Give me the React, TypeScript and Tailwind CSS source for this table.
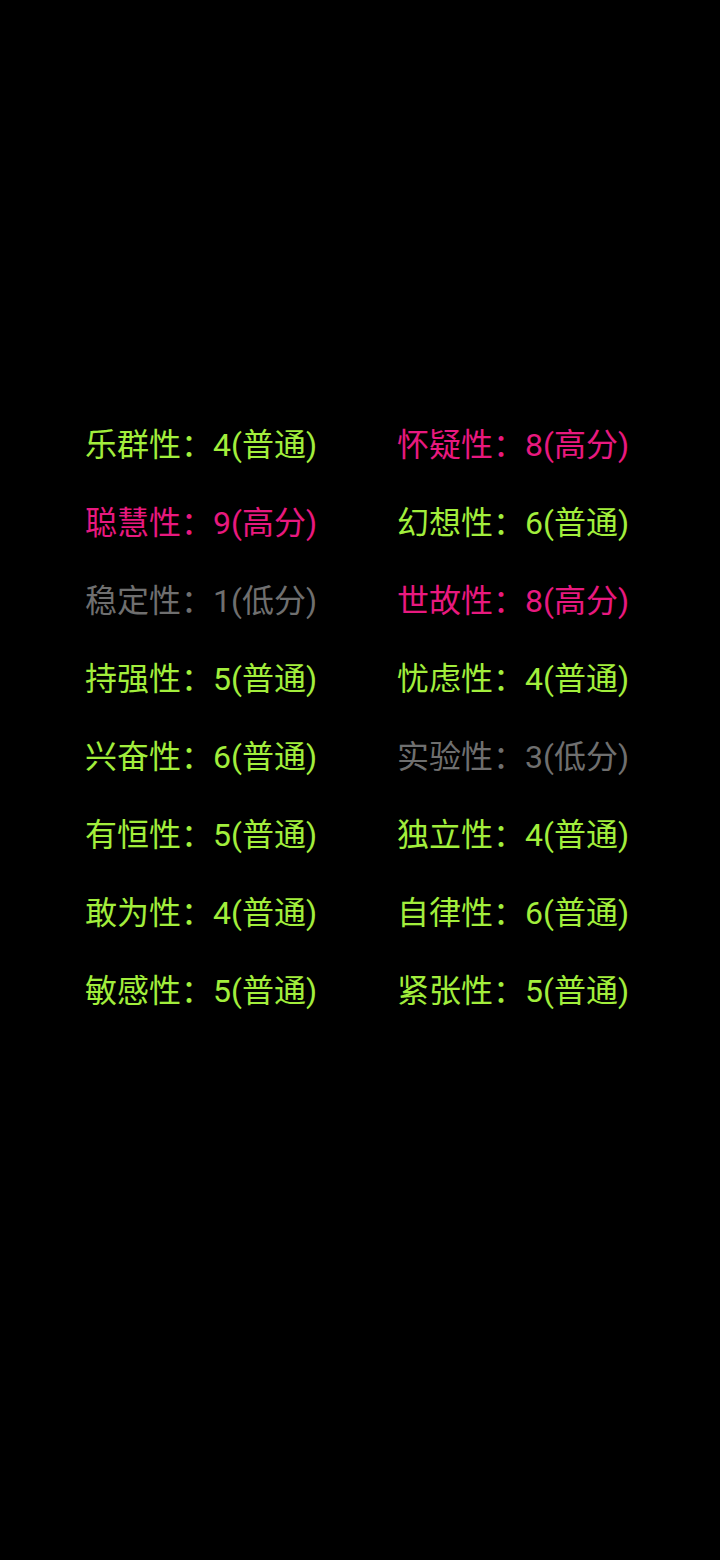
import React from "react";

type Item = { name: string; score: number; level: "普通" | "高分" | "低分" };

const left: Item[] = [
  { name: "乐群性", score: 4, level: "普通" },
  { name: "聪慧性", score: 9, level: "高分" },
  { name: "稳定性", score: 1, level: "低分" },
  { name: "持强性", score: 5, level: "普通" },
  { name: "兴奋性", score: 6, level: "普通" },
  { name: "有恒性", score: 5, level: "普通" },
  { name: "敢为性", score: 4, level: "普通" },
  { name: "敏感性", score: 5, level: "普通" },
];
const right: Item[] = [
  { name: "怀疑性", score: 8, level: "高分" },
  { name: "幻想性", score: 6, level: "普通" },
  { name: "世故性", score: 8, level: "高分" },
  { name: "忧虑性", score: 4, level: "普通" },
  { name: "实验性", score: 3, level: "低分" },
  { name: "独立性", score: 4, level: "普通" },
  { name: "自律性", score: 6, level: "普通" },
  { name: "紧张性", score: 5, level: "普通" },
];

function color(l: Item["level"]) {
  if (l === "高分") return "text-[#e8197f]";
  if (l === "低分") return "text-[#6f6f6f]";
  return "text-[#a2ee3c]";
}

function Row({ it }: { it: Item }) {
  return (
    <div className={`h-[78px] flex items-center whitespace-nowrap ${color(it.level)}`}>
      {it.name}：{it.score}({it.level})
    </div>
  );
}

export default function App() {
  return (
    <div
      className="w-[720px] h-[1560px] bg-black pt-[406px] pl-[85px] flex text-[32px] leading-none"
      style={{ fontFamily: "Roboto, 'Noto Sans CJK SC', sans-serif" }}
    >
      <div className="w-[312px] flex flex-col">
        {left.map((it) => (
          <Row key={it.name} it={it} />
        ))}
      </div>
      <div className="flex flex-col">
        {right.map((it) => (
          <Row key={it.name} it={it} />
        ))}
      </div>
    </div>
  );
}
